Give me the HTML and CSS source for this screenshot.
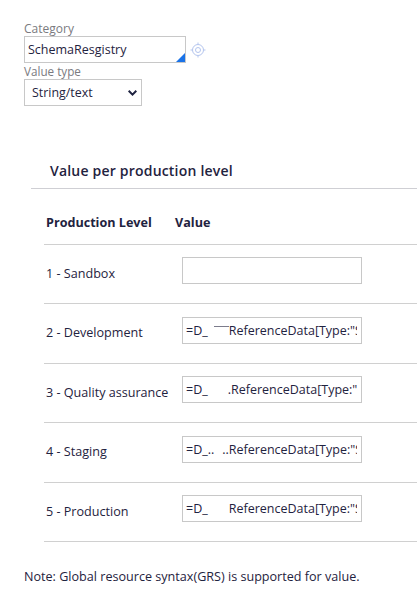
FILE: index.html
```html
<!DOCTYPE html>
<html lang="en">
<head>
    <meta charset="UTF-8">
    <meta name="viewport" content="width=device-width, initial-scale=1.0">
    <title>Value per production level</title>
    <link rel="stylesheet" href="styles.css">
</head>
<body>
    <div class="top-form">
        <label class="field-label">Category</label>
        <div class="category-row">
            <div class="category-input">
                SchemaResgistry
                <span class="corner"></span>
            </div>
            <svg class="target-icon" width="16" height="16" viewBox="0 0 16 16" fill="none" stroke="#b4c5ee" stroke-width="1">
                <circle cx="8" cy="8" r="5.5"/>
                <circle cx="8" cy="8" r="2.5"/>
                <path d="M8 0.5V2.5M8 13.5V15.5M0.5 8H2.5M13.5 8H15.5"/>
            </svg>
        </div>
        <label class="field-label label-type">Value type</label>
        <div class="type-select">
            <span>String/text</span>
            <svg width="9" height="6" viewBox="0 0 9 6" fill="none" stroke="#1f2340" stroke-width="2">
                <path d="M0.7 0.8L4.5 4.6L8.3 0.8"/>
            </svg>
        </div>
    </div>

    <h2 class="section-title">Value per production level</h2>

    <div class="level-table">
        <div class="level-head">
            <div class="col-level">Production Level</div>
            <div>Value</div>
        </div>
        <div class="level-row">
            <div class="col-level">1 - Sandbox</div>
            <div class="value-box"></div>
        </div>
        <div class="level-row">
            <div class="col-level">2 - Development</div>
            <div class="value-box"><div class="value-text">=D_<span class="gap gap-dev"></span>ReferenceData[Type:"SchemaRegistry"]</div></div>
        </div>
        <div class="level-row">
            <div class="col-level">3 - Quality assurance</div>
            <div class="value-box"><div class="value-text">=D_<span class="gap gap-qa"></span>.ReferenceData[Type:"SchemaRegistry"]</div></div>
        </div>
        <div class="level-row">
            <div class="col-level">4 - Staging</div>
            <div class="value-box"><div class="value-text">=D_..<span class="gap gap-stg"></span>..ReferenceData[Type:"SchemaRegistry"]</div></div>
        </div>
        <div class="level-row">
            <div class="col-level">5 - Production</div>
            <div class="value-box"><div class="value-text">=D_<span class="gap gap-prod"></span>ReferenceData[Type:"SchemaRegistry"]</div></div>
        </div>
    </div>

    <p class="note">Note: Global resource syntax(GRS) is supported for value.</p>
</body>
</html>
```

FILE: styles.css
```css
body {
    margin: 0;
    font-family: "Open Sans", sans-serif;
    font-size: 12.6px;
    color: #1f2340;
    background-color: #fff;
    overflow: hidden;
}
.top-form {
    padding: 21px 0 0 24px;
}
.field-label {
    display: block;
    font-size: 12px;
    line-height: 15px;
    color: #7a7a80;
}
.label-type {
    font-size: 11.7px;
}
.category-row {
    display: flex;
    align-items: center;
    gap: 4px;
    margin-bottom: 1px;
}
.category-input {
    position: relative;
    box-sizing: border-box;
    width: 162px;
    height: 27px;
    padding-left: 3px;
    font-size: 12.5px;
    line-height: 25px;
    border: 1px solid #c8c8c8;
}
.corner {
    position: absolute;
    right: 0;
    bottom: 0;
    width: 0;
    height: 0;
    border-left: 9px solid transparent;
    border-bottom: 9px solid #1a73e8;
}
.type-select {
    display: flex;
    align-items: center;
    justify-content: space-between;
    box-sizing: border-box;
    width: 118px;
    height: 27px;
    padding: 0 4px 0 7px;
    font-size: 12.4px;
    line-height: 25px;
    border: 1px solid #c8c8c8;
}
.section-title {
    margin: 55px 0 0 31px;
    padding: 0 0 8px 19px;
    font-size: 14px;
    font-weight: 600;
    line-height: 19px;
    letter-spacing: 0.2px;
    border-bottom: 1px solid #cfcfd4;
}
.level-table {
    margin-left: 44px;
}
.level-head {
    display: flex;
    align-items: center;
    box-sizing: border-box;
    height: 55.75px;
    padding-top: 12px;
    font-weight: 700;
    border-bottom: 1px solid #d0d0d0;
}
.col-level {
    box-sizing: border-box;
    width: 131px;
    padding-left: 2px;
    white-space: nowrap;
}
.level-row {
    display: flex;
    align-items: center;
    box-sizing: border-box;
    height: 59.5px;
    border-bottom: 1px solid #d0d0d0;
}
.level-row .col-level {
    padding-bottom: 1.5px;
}
.value-box {
    box-sizing: border-box;
    width: 180px;
    height: 27px;
    margin-left: 7px;
    margin-top: -7px;
    padding: 0 4px 0 3px;
    border: 1px solid #c8c8c8;
}
.value-text {
    overflow: hidden;
    font-size: 12.5px;
    line-height: 25px;
    white-space: nowrap;
}
.gap {
    display: inline-block;
}
.gap-dev {
    box-sizing: border-box;
    width: 15px;
    height: 9px;
    margin-left: 6px;
    border-top: 1px solid #7c7c8c;
}
.gap-qa {
    width: 20px;
}
.gap-stg {
    width: 8px;
}
.gap-prod {
    width: 21px;
}
.note {
    margin: 26px 0 0 24px;
    font-size: 12.6px;
    line-height: 17px;
}
```
